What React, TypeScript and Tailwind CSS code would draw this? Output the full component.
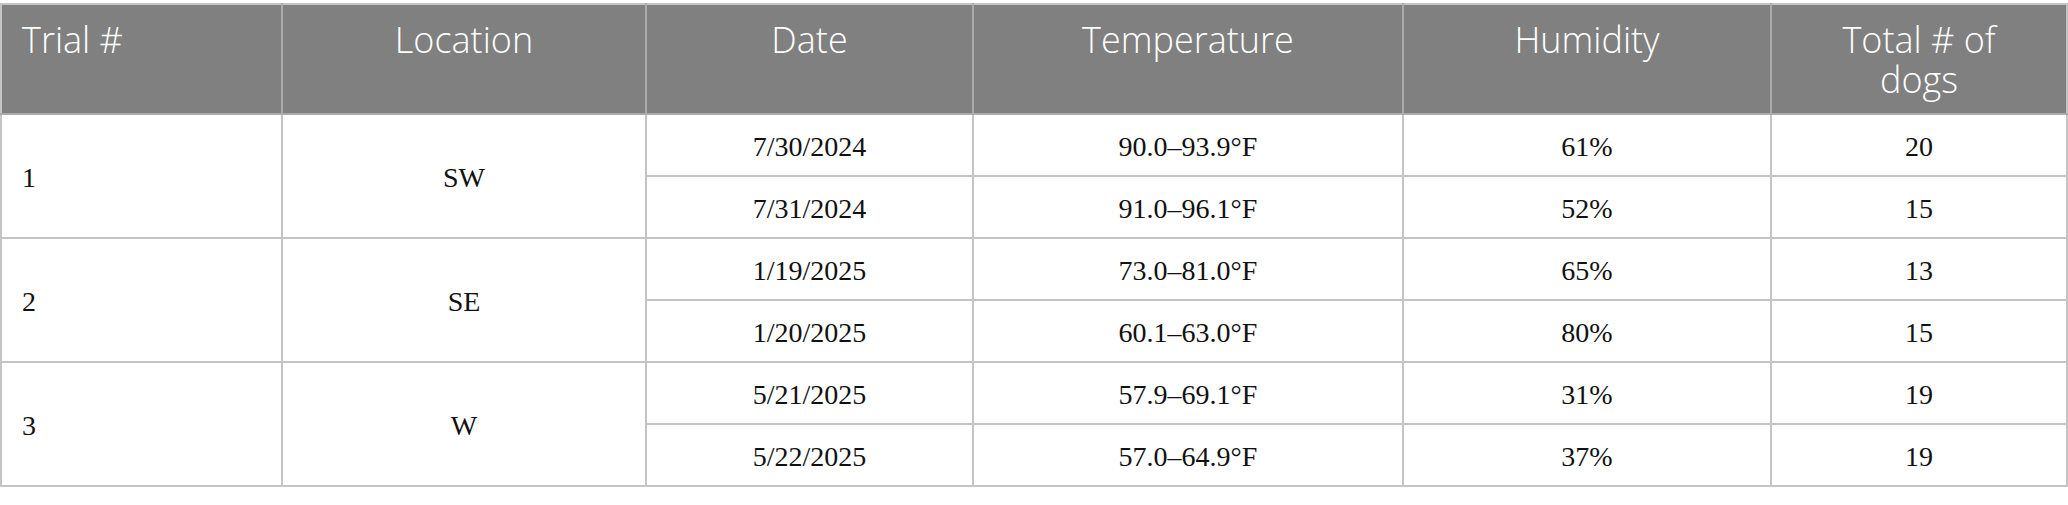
const rows = [
  { trial: "1", loc: "SW", days: [
    ["7/30/2024", "90.0–93.9°F", "61%", "20"],
    ["7/31/2024", "91.0–96.1°F", "52%", "15"],
  ] },
  { trial: "2", loc: "SE", days: [
    ["1/19/2025", "73.0–81.0°F", "65%", "13"],
    ["1/20/2025", "60.1–63.0°F", "80%", "15"],
  ] },
  { trial: "3", loc: "W", days: [
    ["5/21/2025", "57.9–69.1°F", "31%", "19"],
    ["5/22/2025", "57.0–64.9°F", "37%", "19"],
  ] },
];

const th = "border-2 border-[#a9aaa9] border-t-[#c4c4c4] align-top pt-[15px] px-5 text-[36px] leading-[40px] font-light text-white";
const td = "border-2 border-[#c4c4c4] px-5 pt-[3px] text-center align-middle";

export default function App() {
  return (
    <div className="w-[2068px] h-[505px] bg-white pt-[3px]">
      <table className="table-fixed border-collapse w-[2066px]">
        <colgroup>
          <col className="w-[281px]" />
          <col className="w-[364px]" />
          <col className="w-[327px]" />
          <col className="w-[430px]" />
          <col className="w-[368px]" />
          <col className="w-[296px]" />
        </colgroup>
        <thead className="font-['Open_Sans',sans-serif]">
          <tr className="h-[110px] bg-[#7f807f]">
            <th className={th + " text-left border-l-[#c4c4c4]"}>Trial #</th>
            <th className={th + " text-center"}>Location</th>
            <th className={th + " text-center"}>Date</th>
            <th className={th + " text-center"}>Temperature</th>
            <th className={th + " text-center"}>Humidity</th>
            <th className={th + " text-center border-r-[#c4c4c4]"}>Total # of<br />dogs</th>
          </tr>
        </thead>
        <tbody className="font-['Liberation_Serif',serif] text-[28px] text-[#111]">
          {rows.map((r) =>
            r.days.map((d, i) => (
              <tr key={r.trial + i} className="h-[62px]">
                {i === 0 && (
                  <>
                    <td rowSpan={2} className={td + " text-left"}>{r.trial}</td>
                    <td rowSpan={2} className={td}>{r.loc}</td>
                  </>
                )}
                <td className={td}>{d[0]}</td>
                <td className={td}>{d[1]}</td>
                <td className={td}>{d[2]}</td>
                <td className={td}>{d[3]}</td>
              </tr>
            ))
          )}
        </tbody>
      </table>
    </div>
  );
}
